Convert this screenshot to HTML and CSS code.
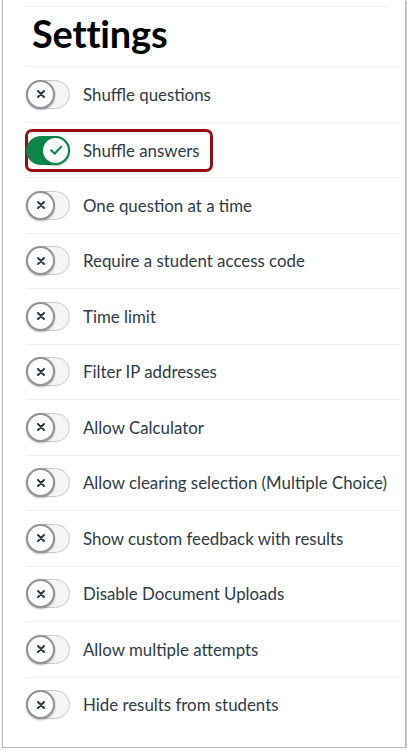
FILE: index.html
```html
<!DOCTYPE html>
<html>
<head>
<meta charset="utf-8">
<link rel="stylesheet" href="styles.css">
</head>
<body>
<div class="frame">
  <div class="topline"></div>
  <h1 class="title">Settings</h1>
  <ul class="list">
    <li class="row"><span class="toggle"><span class="knob"><svg viewBox="0 0 12 12"><path d="M3 3L9 9M9 3L3 9"/></svg></span></span><span class="label">Shuffle questions</span></li>
    <li class="row"><span class="hl"><span class="toggle on"><span class="knob"><svg viewBox="0 0 12 12"><path d="M2.3 6.2L5 8.8L9.9 3.6"/></svg></span></span><span class="label">Shuffle answers</span></span></li>
    <li class="row"><span class="toggle"><span class="knob"><svg viewBox="0 0 12 12"><path d="M3 3L9 9M9 3L3 9"/></svg></span></span><span class="label">One question at a time</span></li>
    <li class="row"><span class="toggle"><span class="knob"><svg viewBox="0 0 12 12"><path d="M3 3L9 9M9 3L3 9"/></svg></span></span><span class="label">Require a student access code</span></li>
    <li class="row"><span class="toggle"><span class="knob"><svg viewBox="0 0 12 12"><path d="M3 3L9 9M9 3L3 9"/></svg></span></span><span class="label">Time limit</span></li>
    <li class="row"><span class="toggle"><span class="knob"><svg viewBox="0 0 12 12"><path d="M3 3L9 9M9 3L3 9"/></svg></span></span><span class="label">Filter IP addresses</span></li>
    <li class="row"><span class="toggle"><span class="knob"><svg viewBox="0 0 12 12"><path d="M3 3L9 9M9 3L3 9"/></svg></span></span><span class="label">Allow Calculator</span></li>
    <li class="row"><span class="toggle"><span class="knob"><svg viewBox="0 0 12 12"><path d="M3 3L9 9M9 3L3 9"/></svg></span></span><span class="label">Allow clearing selection (Multiple Choice)</span></li>
    <li class="row"><span class="toggle"><span class="knob"><svg viewBox="0 0 12 12"><path d="M3 3L9 9M9 3L3 9"/></svg></span></span><span class="label">Show custom feedback with results</span></li>
    <li class="row"><span class="toggle"><span class="knob"><svg viewBox="0 0 12 12"><path d="M3 3L9 9M9 3L3 9"/></svg></span></span><span class="label">Disable Document Uploads</span></li>
    <li class="row"><span class="toggle"><span class="knob"><svg viewBox="0 0 12 12"><path d="M3 3L9 9M9 3L3 9"/></svg></span></span><span class="label">Allow multiple attempts</span></li>
    <li class="row last"><span class="toggle"><span class="knob"><svg viewBox="0 0 12 12"><path d="M3 3L9 9M9 3L3 9"/></svg></span></span><span class="label">Hide results from students</span></li>
  </ul>
</div>
</body>
</html>
```

FILE: styles.css
```css
html, body {
  margin: 0;
  padding: 0;
  background: #ffffff;
}
body {
  font-family: Lato, "Open Sans", sans-serif;
  color: #2d3b45;
}
.frame {
  box-sizing: border-box;
  width: 404px;
  height: 748px;
  margin-left: 2px;
  border: 1px solid #b8b8b8;
  border-top: none;
  box-shadow: 1px 1px 2px rgba(0, 0, 0, 0.35);
  background: #fff;
  padding: 6px 4px 0 23px;
}
.topline {
  height: 1px;
  background: #f2f2f2;
  margin: 0 12px 0 -4px;
}
.title {
  margin: 0;
  padding: 0 0 0 6px;
  height: 59px;
  line-height: 52px;
  font-size: 38px;
  font-weight: 700;
  color: #000;
  letter-spacing: -0.2px;
}
.list {
  list-style: none;
  margin: 0;
  padding: 0;
  border-top: 1px solid #eceeef;
}
.row {
  display: flex;
  align-items: center;
  height: 54.5px;
  border-bottom: 1px solid #eceeef;
}
.row.last {
  border-bottom: none;
}
.hl {
  display: flex;
  align-items: center;
  margin-left: -1px;
  padding: 4px 10px 4px 0;
  border: 3px solid #950f14;
  border-radius: 7px;
  margin-top: 1px;
}
.hl .toggle {
  margin-left: -2px;
}
.toggle {
  position: relative;
  box-sizing: border-box;
  width: 44px;
  height: 29px;
  border-radius: 15px;
  background: #f5f5f5;
  border: 1px solid #c4cace;
  flex: none;
}
.knob {
  position: absolute;
  left: -1px;
  top: -1px;
  box-sizing: border-box;
  width: 29px;
  height: 29px;
  border-radius: 50%;
  background: #fff;
  border: 2px solid #8d959b;
  box-shadow: 0 1px 2px rgba(0, 0, 0, 0.3);
  display: flex;
  align-items: center;
  justify-content: center;
}
.knob svg {
  width: 12px;
  height: 12px;
  fill: none;
  stroke: #2d3b45;
  stroke-width: 2;
  stroke-linecap: round;
}
.toggle.on {
  background: #0b874b;
  border-color: #0b874b;
}
.toggle.on .knob {
  left: auto;
  right: -1px;
  border-color: #0b874b;
}
.toggle.on .knob svg {
  width: 16px;
  height: 16px;
  stroke: #0b874b;
  stroke-width: 1.6;
}
.label {
  margin-left: 13px;
  font-size: 16.85px;
  white-space: nowrap;
}
```
